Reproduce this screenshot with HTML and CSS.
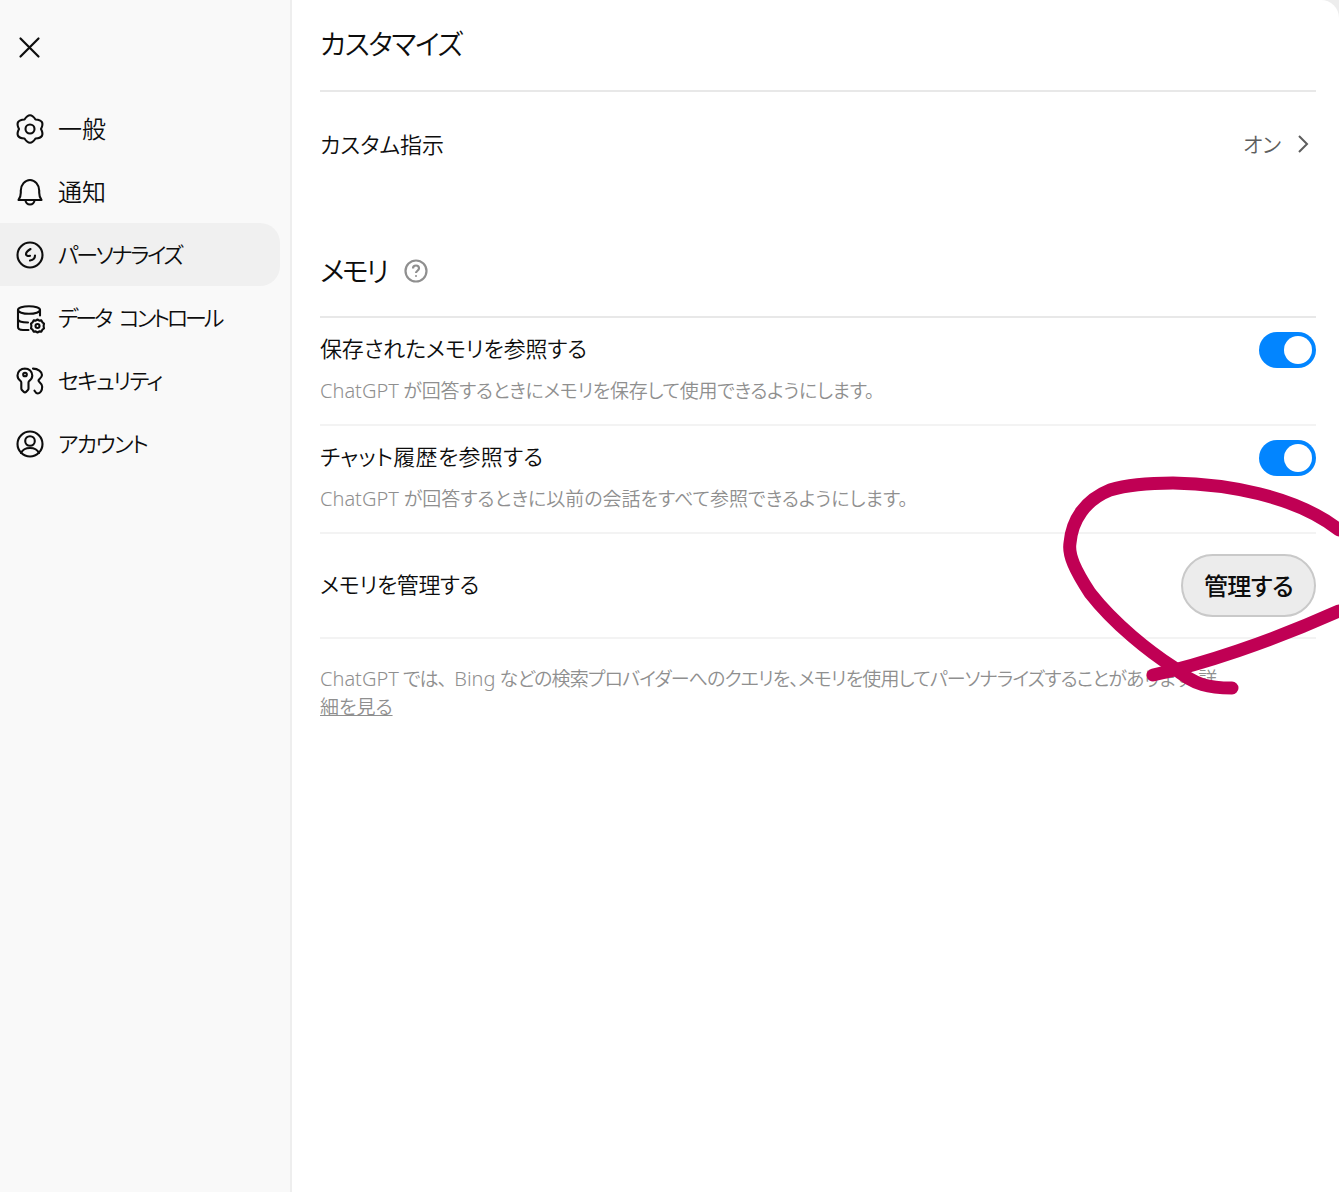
FILE: index.html
```html
<!DOCTYPE html>
<html lang="ja">
<head>
<meta charset="utf-8">
<title>カスタマイズ</title>
<link rel="stylesheet" href="styles.css">
</head>
<body>
<div class="app">
  <aside class="sidebar">
    <button class="close" aria-label="閉じる">
      <svg class="ico" viewBox="0 0 24 24"><path d="M2.500 2.500l18 18M20.500 2.500l-18 18"/></svg>
    </button>
    <nav class="nav">
      <div class="nav-item"><svg class="ico" viewBox="0 0 28 28"><path d="M8.500 4.470Q14 -4 19.500 4.470Q29.600 5 25 14Q29.600 23 19.500 23.530Q14 32 8.500 23.530Q-1.600 23 3 14Q-1.600 5 8.500 4.470z"/><circle cx="14" cy="14" r="4.500"/></svg><span>一般</span></div>
      <div class="nav-item"><svg class="ico" viewBox="0 0 28 28"><path d="M2.500 22h23c-1.600-2-2.300-3.800-2.300-7.200V12.500C23.200 7 19 2 14 2S4.800 7 4.800 12.500v2.300c0 3.400-.7 5.200-2.300 7.200z"/><path d="M9.500 22c0 2.500 2 4.500 4.500 4.500s4.500-2 4.500-4.500"/></svg><span>通知</span></div>
      <div class="nav-item active"><svg class="ico" viewBox="0 0 28 28"><circle cx="14" cy="14" r="12.500"/><path d="M14.500 8c-2.500 1.500-4.500 3.300-4.500 5.200 0 1.600 2 2 4 1.600M19 14.500c0 2.500-2 4.500-5 5"/></svg><span class="kana ls-pers">パーソナライズ</span></div>
      <div class="nav-item"><svg class="ico" viewBox="0 0 28 28"><ellipse cx="13" cy="6" rx="11" ry="3.800"/><path d="M2 6v17c0 2 2 3 5 3h5.500M24 6v5.500M2 15c0 2 3.500 3.500 10 3.500"/><circle cx="21.500" cy="22" r="2"/><path d="M21.500 15.500l1.800 1.100 2.100-.2 1 1.900 1.600 1.200-.4 2.500.4 2.500-1.600 1.200-1 1.900-2.100-.2-1.800 1.100-1.800-1.100-2.100.2-1-1.900-1.600-1.200.4-2.500-.4-2.500 1.600-1.200 1-1.900 2.100.2z"/></svg><span class="kana ls-data">データ コントロール</span></div>
      <div class="nav-item"><svg class="ico" viewBox="0 0 28 28"><path d="M9 1.500c-4.300 0-7.500 3.200-7.500 7 0 2.300 1.100 4 2.900 5.300.6.500.9 1 .9 1.700v6c0 .6.200 1 .6 1.400l2 2c.6.600 1.500.6 2.100 0l1.900-1.900c.4-.4.600-.8.600-1.400v-6.100c0-.7.300-1.200.9-1.700 1.800-1.300 2.900-3 2.900-5.300 0-3.800-3.200-7-7.500-7z"/><circle cx="9" cy="7.500" r="1.800"/><path d="M17 1.600c5 .2 9 2.900 9 6.400 0 1.900-1.400 3-2.800 4.300-.9.900-.9 1.600 0 2.500 1.500 1.400 3 2.800 3 4.900 0 3.800-2 6.800-4.300 6.800-1.700 0-2.600-1.400-3.400-2.800"/></svg><span class="kana ls-sec">セキュリティ</span></div>
      <div class="nav-item"><svg class="ico" viewBox="0 0 28 28"><circle cx="14" cy="14" r="12.500"/><circle cx="14" cy="11" r="4.800"/><path d="M5 23c1.500-3.200 4.700-5 9-5s7.500 1.800 9 5"/></svg><span class="kana ls-acct">アカウント</span></div>
    </nav>
  </aside>
  <main class="main">
    <h1 class="title">カスタマイズ</h1>
    <div class="row-custom">
      <span class="label">カスタム指示</span>
      <span class="status">オン<svg class="chev" viewBox="0 0 16 24"><path d="M3 4l8 8-8 8"/></svg></span>
    </div>
    <h2 class="section"><span>メモリ</span><svg class="help" viewBox="0 0 24 24"><circle cx="12" cy="12" r="10.500"/><path d="M9 9.500c0-1.800 1.300-3 3-3s3 1.200 3 2.800c0 2.400-3 2.500-3 4.700"/><circle class="dot" cx="12" cy="17" r="1"/></svg></h2>
    <div class="setting">
      <div class="setting-top"><span class="label ls-saved">保存されたメモリを参照する</span><span class="toggle"><span class="knob"></span></span></div>
      <p class="desc ls-d1"><span class="latin">ChatGPT</span> が回答するときにメモリを保存して使用できるようにします。</p>
    </div>
    <div class="setting">
      <div class="setting-top"><span class="label ls-hist">チャット履歴を参照する</span><span class="toggle"><span class="knob"></span></span></div>
      <p class="desc"><span class="latin">ChatGPT</span> が回答するときに以前の会話をすべて参照できるようにします。</p>
    </div>
    <div class="manage">
      <span class="label ls-manage">メモリを管理する</span>
      <button class="btn">管理する</button>
    </div>
    <p class="note"><span class="latin">ChatGPT</span> では、<span class="latin bing">Bing</span> などの検索プロバイダーへのクエリを、メモリを使用してパーソナライズすることがあります。<a href="#">詳細を見る</a></p>
  </main>
</div>
<svg class="scribble" viewBox="0 0 1339 1192"><path d="M1232 688C1210 688 1195 686 1173 667C1150 652 1115 625 1090 593C1075 570 1068 555 1070 543C1072 520 1085 500 1110 490C1130 484 1150 483 1173 483C1225 484 1295 495 1339 530"/><path d="M1153 675C1200 665 1270 642 1339 611"/></svg>
</body>
</html>
```
FILE: styles.css
```css
* { box-sizing: border-box; }
html, body { margin: 0; height: 100%; background: #ededed; }
body {
  font-family: "Noto Sans", "Noto Sans CJK JP", sans-serif;
  font-weight: 400;
  font-feature-settings: "palt";
  color: #0d0d0d;
  overflow: hidden;
}
.app { display: flex; height: 1192px; background: #fff; border-top-right-radius: 18px; overflow: hidden; }
.sidebar { width: 292px; flex: none; background: #f9f9f9; border-right: 2px solid #eeeeee; padding: 28px 10px 0 0; }
.close { display: flex; align-items: center; border: 0; background: none; padding: 0 0 0 18px; height: 40px; }
.close .ico { width: 24px; height: 24px; stroke-width: 2.2; }
.ico { fill: none; stroke: #0d0d0d; stroke-width: 2; width: 28px; height: 28px; flex: none; stroke-linecap: round; stroke-linejoin: round; overflow: visible; }
.nav { margin-top: 29px; display: flex; flex-direction: column; }
.nav-item { display: flex; align-items: center; gap: 14px; height: 63px; padding-left: 16px; font-size: 24px; font-weight: 350; border-radius: 0 20px 20px 0; }
.nav-item .ico { stroke-width: 2.1; }
.nav-item span { margin-top: -3px; }
.kana { font-size: 22px; }
.ls-pers { letter-spacing: -2.3px; }
.ls-data { letter-spacing: -3.1px; word-spacing: 6px; }
.ls-sec { letter-spacing: -1.7px; }
.ls-acct { letter-spacing: -1.6px; }
.active { background: #f0f0f0; }
.main { flex: 1; padding: 0 23px 0 28px; min-width: 0; }
.title { margin: 0; height: 92px; border-bottom: 2px solid #e8e8e8; font-size: 28px; font-weight: 350; line-height: 88px; letter-spacing: -1.4px; }
.label { font-size: 22px; font-weight: 350; }
.ls-saved { letter-spacing: -.15px; }
.ls-hist { letter-spacing: .3px; }
.ls-manage { letter-spacing: -.4px; }
.row-custom { display: flex; align-items: center; justify-content: space-between; height: 106px; padding-bottom: 4px; }
.status { display: flex; align-items: center; gap: 15px; font-size: 21px; font-weight: 350; color: #5d5d5d; padding-right: 4px; }
.chev { width: 16px; height: 24px; margin-top: 2px; fill: none; stroke: #5d5d5d; stroke-width: 2; }
.section { margin: 0; height: 120px; padding-top: 26px; border-bottom: 2px solid #e8e8e8; display: flex; align-items: center; gap: 17px; font-size: 28px; font-weight: 350; letter-spacing: -2.5px; }
.help { width: 24px; height: 24px; margin-top: 2px; fill: none; stroke: #8f8f8f; stroke-width: 2.2; }
.help .dot { fill: #8f8f8f; stroke: none; }
.setting { height: 108px; border-bottom: 2px solid #f3f3f3; padding-top: 14px; }
.setting-top { display: flex; align-items: center; justify-content: space-between; height: 36px; }
.setting-top .label { margin-top: -6px; }
.toggle { width: 57px; height: 36px; background: #0285ff; border-radius: 18px; display: flex; align-items: center; justify-content: flex-end; padding-right: 4px; }
.knob { width: 28px; height: 28px; border-radius: 50%; background: #fff; }
.desc { margin: 9px 0 0; font-size: 19px; font-weight: 350; line-height: 28px; color: #8f8f8f; }
.latin { font-size: 20px; letter-spacing: 0; }
.bing { margin-left: 8px; }
.ls-d1 { letter-spacing: -.3px; }
.manage { height: 105px; border-bottom: 2px solid #f3f3f3; display: flex; align-items: center; justify-content: space-between; }
.manage .label { margin-top: -6px; }
.btn { width: 135px; height: 63px; padding: 0 0 3px; border-radius: 32px; border: 2px solid #c9c9c9; background: #ececec; font: inherit; font-size: 24px; font-weight: 500; letter-spacing: -.5px; color: #0d0d0d; }
.note { margin: 26px 0 0; max-width: 906px; font-size: 19px; font-weight: 350; line-height: 28px; letter-spacing: -.87px; color: #8f8f8f; }
.note a { color: #8f8f8f; letter-spacing: 0; }
.scribble { position: absolute; left: 0; top: 0; width: 1339px; height: 1192px; fill: none; stroke: #c00054; stroke-width: 13; stroke-linecap: round; stroke-linejoin: round; pointer-events: none; }
```
